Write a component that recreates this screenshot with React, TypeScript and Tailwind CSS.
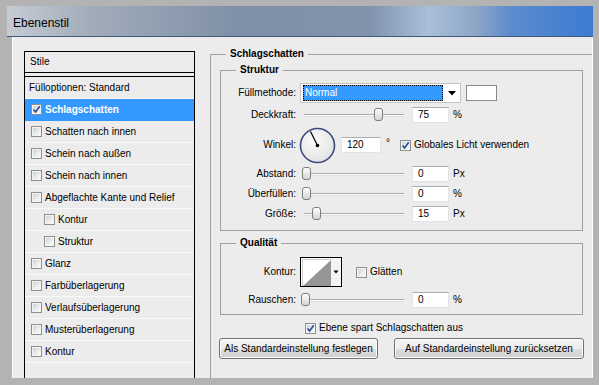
import React from "react";

function Checkbox({ checked = false }: { checked?: boolean }) {
  return (
    <div className="flex h-[11px] w-[11px] shrink-0 items-center justify-center border border-[#8e8f8f] bg-[#f4f4f4] p-[1px]">
      <div className="relative h-full w-full bg-[linear-gradient(135deg,#cfd1d4_0%,#eceded_60%,#f8f8f8_100%)]">
        {checked && (
          <svg width="9" height="9" viewBox="0 0 9 9" className="absolute left-[-1px] top-[-1px]">
            <path d="M1.5 4.5 L3.6 7 L7.8 1.2" fill="none" stroke="#27479a" strokeWidth="1.6" />
          </svg>
        )}
      </div>
    </div>
  );
}

function Slider({ pos }: { pos: number }) {
  return (
    <div className="relative ml-[5px] h-[14px] w-[103px] shrink-0">
      <div className="absolute left-[3px] right-0 top-[6px] h-[3px] border-t border-b border-t-[#a9a9a9] border-b-[#dedede] bg-white" />
      <div
        className="absolute top-0 h-[13px] w-[9px] rounded-[3px] border border-[#7d7d7d] bg-[linear-gradient(#ffffff,#d4d4d4)]"
        style={{ left: pos }}
      />
    </div>
  );
}

function Field({ value, w = "w-[37px]", ml = "ml-[8px]" }: { value: string; w?: string; ml?: string }) {
  return (
    <div className={`${ml} ${w} flex h-[16px] shrink-0 items-center border border-[#e2e3ea] border-t-[#abadb3] bg-white pl-[5px]`}>
      {value}
    </div>
  );
}

function Label({ children }: { children: React.ReactNode }) {
  return <div className="w-[75px] shrink-0 text-right">{children}</div>;
}

const items: { t: string; cb: boolean; indent?: boolean; checked?: boolean; sel?: boolean }[] = [
  { t: "Fülloptionen: Standard", cb: false },
  { t: "Schlagschatten", cb: true, checked: true, sel: true },
  { t: "Schatten nach innen", cb: true },
  { t: "Schein nach außen", cb: true },
  { t: "Schein nach innen", cb: true },
  { t: "Abgeflachte Kante und Relief", cb: true },
  { t: "Kontur", cb: true, indent: true },
  { t: "Struktur", cb: true, indent: true },
  { t: "Glanz", cb: true },
  { t: "Farbüberlagerung", cb: true },
  { t: "Verlaufsüberlagerung", cb: true },
  { t: "Musterüberlagerung", cb: true },
  { t: "Kontur", cb: true },
];

export default function App() {
  return (
    <div className="h-[385px] w-[599px] overflow-hidden bg-[#b3b3b3] pb-[7px] pl-[7px] pr-[6px] pt-[6px] font-['Liberation_Sans',Arial,sans-serif] text-[10px] leading-[12px] text-black">
      <div className="flex h-full flex-col">
        {/* Title bar */}
        <div className="flex h-[31px] shrink-0 items-center border-b border-[#41577a] bg-[linear-gradient(90deg,#c6cbd2_0%,#a2adbb_14%,#7e8fa6_40%,#8294ad_62%,#a9bfda_72%,#8ea6c6_80%,#5d8ccd_86%,#3b7bd4_100%)] pl-[6px] pt-[3px] text-[12px] leading-[14px]">
          <span>Ebenenstil</span>
        </div>

        {/* Body */}
        <div className="ml-[5px] flex min-h-0 flex-1 border-x border-white bg-[#ececec]">
          {/* Left list */}
          <div className="ml-[11px] mt-[14px] flex w-[171px] shrink-0 flex-col border-x border-t border-black bg-[#ececec]">
            <div className="flex h-[21px] items-center border-b border-black pl-[5px]">Stile</div>
            <div className="h-[3px]" />
            <div className="flex-1 border-t border-black">
              {items.map((it, i) => (
                <div
                  key={i}
                  className={`flex h-[22px] items-center border-b ${
                    it.sel ? "border-[#3399ff] bg-[#3399ff] font-bold text-white" : "border-[#f9f9f9]"
                  } ${it.cb ? (it.indent ? "pl-[19px]" : "pl-[6px]") : "pl-[4px]"}`}
                >
                  {it.cb && <Checkbox checked={it.checked} />}
                  <span className={it.cb ? "ml-[3px]" : ""}>{it.t}</span>
                </div>
              ))}
            </div>
          </div>

          {/* Right side */}
          <fieldset className="ml-[15px] mt-[11px] min-w-0 flex-1 border-l border-t border-[#a0a0a0] pl-[9px]">
            <legend className="ml-[6px] px-[4px] font-bold">Schlagschatten</legend>

            {/* Struktur */}
            <fieldset className="mt-[4px] w-[363px] border border-[#a0a0a0] pb-[6px] pt-[6px]">
              <legend className="ml-[15px] px-[4px] font-bold">Struktur</legend>

              <div className="flex h-[22px] items-center">
                <Label>Füllmethode:</Label>
                <div className="ml-[4px] flex h-[20px] w-[161px] shrink-0 items-center border border-[#c4c4c4] bg-white pl-[2px]">
                  <div className="flex h-[16px] w-[140px] items-center border border-dotted border-black bg-[#3399ff] pl-[1px] text-white">
                    Normal
                  </div>
                  <div className="flex flex-1 items-center justify-center">
                    <svg width="8" height="5" viewBox="0 0 8 5">
                      <path d="M0 0 H8 L4 4.5 Z" fill="#000" />
                    </svg>
                  </div>
                </div>
                <div className="ml-[5px] h-[16px] w-[31px] shrink-0 border border-[#8a8a8a] bg-white" />
              </div>

              <div className="flex h-[22px] items-center">
                <Label>Deckkraft:</Label>
                <Slider pos={73} />
                <Field value="75" />
                <span className="ml-[4px]">%</span>
              </div>

              <div className="flex h-[38px] items-center">
                <Label>Winkel:</Label>
                <svg width="37" height="37" viewBox="0 0 37 37" className="ml-[3px] shrink-0">
                  <defs>
                    <radialGradient id="dialg" cx="0.4" cy="0.35" r="0.7">
                      <stop offset="0" stopColor="#fbfbfb" />
                      <stop offset="1" stopColor="#e2e2e2" />
                    </radialGradient>
                  </defs>
                  <circle cx="18.5" cy="18.5" r="17" fill="url(#dialg)" stroke="#3e4a7c" strokeWidth="1.6" />
                  <line x1="18.5" y1="18.5" x2="11.5" y2="4.5" stroke="#000" strokeWidth="1.2" />
                  <circle cx="18.5" cy="18.5" r="1.8" fill="#000" />
                </svg>
                <Field value="120" w="w-[40px]" ml="ml-[5px]" />
                <span className="ml-[5px] self-start pt-[11px]">°</span>
                <div className="ml-[10px]">
                  <Checkbox checked />
                </div>
                <span className="ml-[3px]">Globales Licht verwenden</span>
              </div>

              <div className="flex h-[20px] items-center">
                <Label>Abstand:</Label>
                <Slider pos={1} />
                <Field value="0" />
                <span className="ml-[4px]">Px</span>
              </div>
              <div className="flex h-[20px] items-center">
                <Label>Überfüllen:</Label>
                <Slider pos={1} />
                <Field value="0" />
                <span className="ml-[4px]">%</span>
              </div>
              <div className="flex h-[20px] items-center">
                <Label>Größe:</Label>
                <Slider pos={11} />
                <Field value="15" />
                <span className="ml-[4px]">Px</span>
              </div>
            </fieldset>

            {/* Qualität */}
            <fieldset className="mt-[6px] w-[363px] border border-[#a0a0a0] pb-[4px] pt-[8px]">
              <legend className="ml-[15px] px-[4px] font-bold">Qualität</legend>

              <div className="flex h-[30px] items-center">
                <Label>Kontur:</Label>
                <div className="ml-[4px] h-[30px] w-[42px] shrink-0 border border-black bg-white">
                  <svg width="40" height="28" viewBox="0 0 40 28">
                    <rect x="1.5" y="1.5" width="29" height="26" fill="#fff" stroke="#d0d0d0" />
                    <polygon points="2,28 30,2 30,28" fill="#959595" />
                    <rect x="30" y="0" width="10" height="28" fill="#f3f3f3" />
                    <polygon points="32.5,12.5 37.5,12.5 35,15.5" fill="#000" />
                  </svg>
                </div>
                <div className="ml-[14px]">
                  <Checkbox />
                </div>
                <span className="ml-[3px]">Glätten</span>
              </div>

              <div className="mt-[3px] flex h-[20px] items-center">
                <Label>Rauschen:</Label>
                <Slider pos={0} />
                <Field value="0" />
                <span className="ml-[4px]">%</span>
              </div>
            </fieldset>

            <div className="mt-[4px] flex h-[18px] items-center pl-[85px]">
              <Checkbox checked />
              <span className="ml-[3px]">Ebene spart Schlagschatten aus</span>
            </div>

            <div className="-ml-[1px] mt-[1px] flex h-[21px]">
              <button className="flex h-[21px] w-[159px] items-center justify-center rounded-[3px] border border-[#707070] bg-[linear-gradient(#f4f4f4_0%,#ececec_50%,#dddddd_51%,#d0d0d0_100%)] text-[10px] leading-[12px] shadow-[inset_0_0_0_1px_#fcfcfc]">
                Als Standardeinstellung festlegen
              </button>
              <button className="ml-[16px] flex h-[21px] w-[190px] items-center justify-center rounded-[3px] border border-[#707070] bg-[linear-gradient(#f4f4f4_0%,#ececec_50%,#dddddd_51%,#d0d0d0_100%)] text-[10px] leading-[12px] shadow-[inset_0_0_0_1px_#fcfcfc]">
                Auf Standardeinstellung zurücksetzen
              </button>
            </div>
          </fieldset>
        </div>
      </div>
    </div>
  );
}
